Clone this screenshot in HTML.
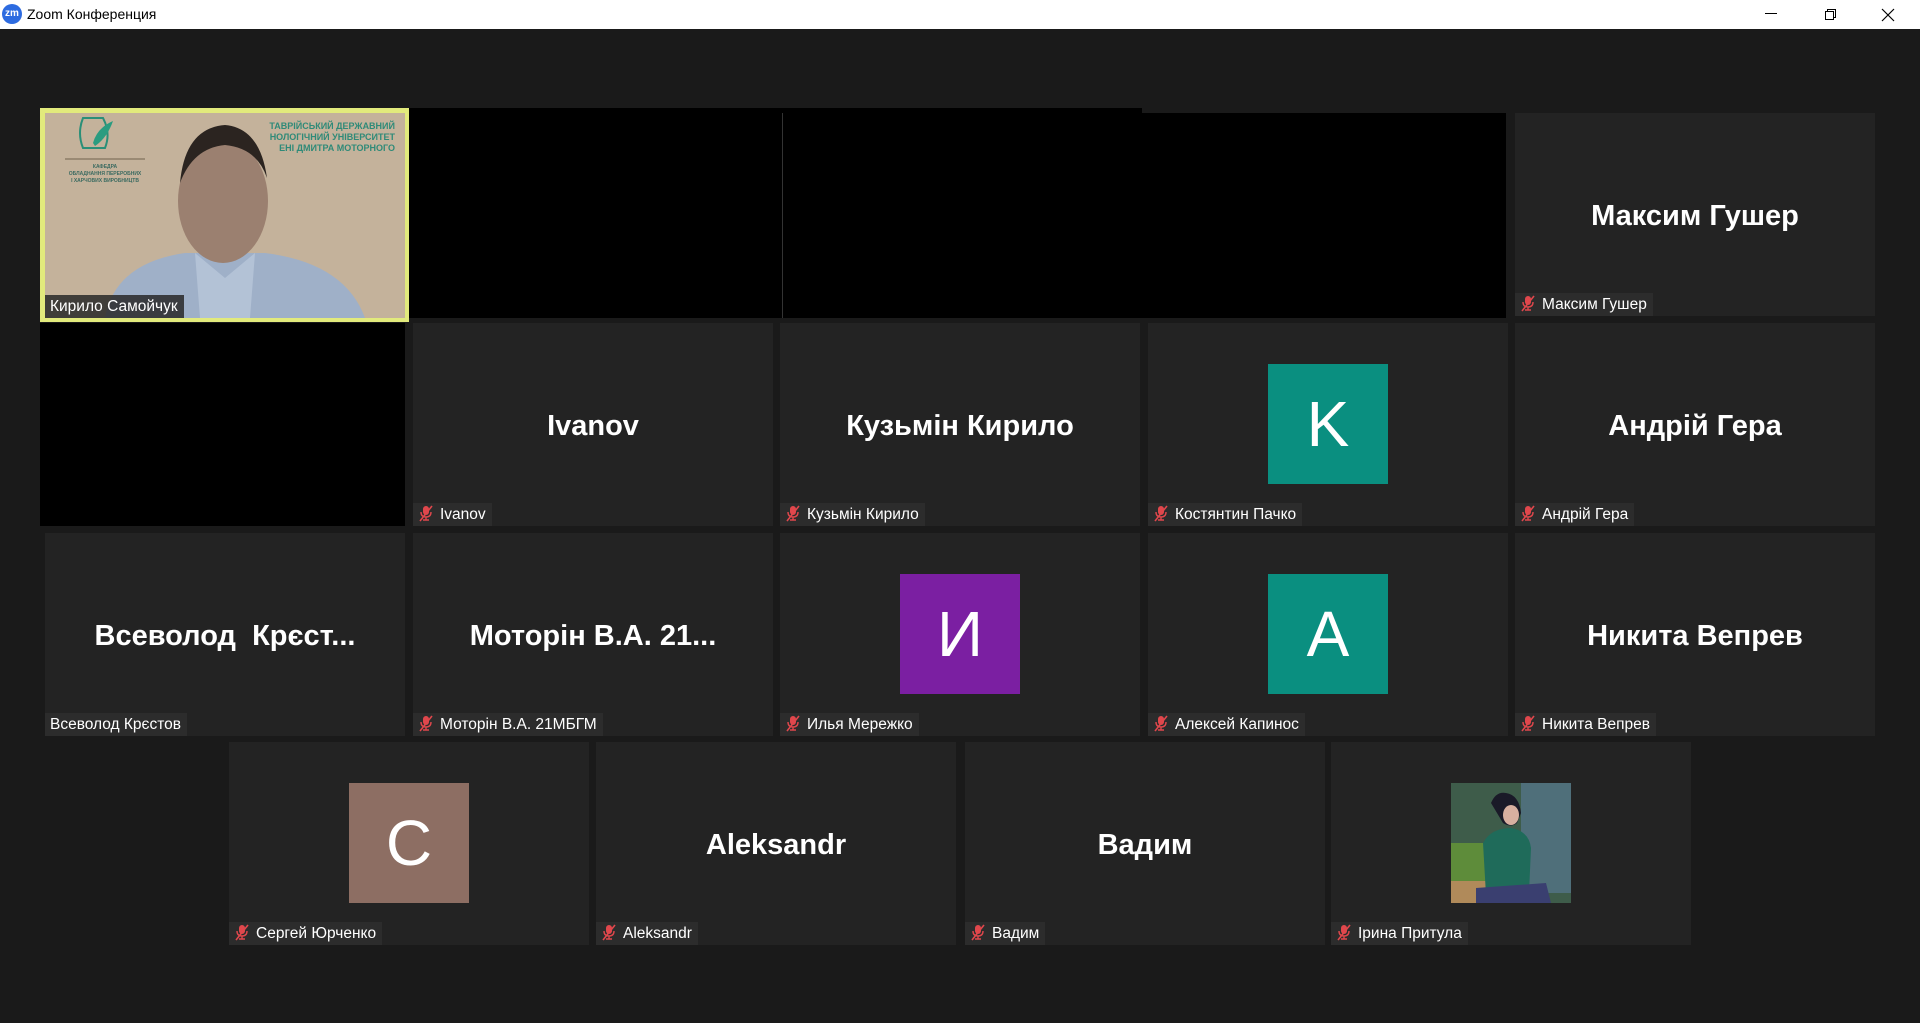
<!DOCTYPE html>
<html><head><meta charset="utf-8"><style>
*{margin:0;padding:0;box-sizing:border-box}
body{width:1920px;height:1023px;background:#1a1a1a;overflow:hidden;font-family:"Liberation Sans","DejaVu Sans",sans-serif;position:relative}
.tb{position:absolute;left:0;top:0;width:1920px;height:29px;background:#fff;color:#000;font-size:14px}
.tile{position:absolute;width:360px;height:203px;background:#232323;overflow:hidden}
.big{position:absolute;left:0;right:0;top:86px;text-align:center;color:#fff;font-weight:bold;font-size:29px;line-height:34px;white-space:nowrap}
.lab{position:absolute;left:0;bottom:-1px;height:24px;background:#2c2c2c;color:#fff;font-size:15.5px;line-height:24px;padding:0 6px 0 5px;white-space:nowrap}
.lab svg{vertical-align:-3px;margin-right:6px}
.av{position:absolute;left:120px;top:41px;width:120px;height:120px;color:#fff;font-size:64px;text-align:center;line-height:120px}
.blk{position:absolute;background:#000}
</style></head><body>
<div class="tb">
<div style="position:absolute;left:2px;top:4px;width:20px;height:20px;border-radius:50%;background:#2d6be0;color:#fff;font-size:10px;line-height:20px;text-align:center;font-weight:bold">zm</div>
<div style="position:absolute;left:27px;top:6px;font-size:14px">Zoom Конференция</div>
<div style="position:absolute;left:1765px;top:13px;width:12px;height:1px;background:#000"></div>
<div style="position:absolute;left:1827px;top:9px;width:9px;height:9px;border:1px solid #000"></div>
<div style="position:absolute;left:1825px;top:11px;width:9px;height:9px;border:1px solid #000;background:#fff"></div>
<svg style="position:absolute;left:1881px;top:8px" width="14" height="14"><path d="M1 1L13 13M13 1L1 13" stroke="#000" stroke-width="1.2"/></svg>
</div>

<div style="position:absolute;left:40px;top:108px;width:369px;height:214px;background:#e2ea7c"></div>
<div style="position:absolute;left:45px;top:113px;width:360px;height:205px;overflow:hidden;background:#c6b39c">
<svg width="360" height="205" viewBox="0 0 360 205">
<rect width="360" height="205" fill="#c4b29b"/>
<path d="M38 5 L58 5 Q66 20 60 35 L38 35 Q32 20 38 5Z" fill="none" stroke="#2a8f78" stroke-width="2"/>
<path d="M48 30 Q52 15 68 8 Q62 25 50 33Z" fill="#2a9c80"/>
<rect x="20" y="45" width="80" height="2" fill="#9a8a74"/>
<text x="60" y="55" font-size="5" fill="#3a6a60" text-anchor="middle" font-weight="bold">КАФЕДРА</text>
<text x="60" y="62" font-size="5" fill="#3a6a60" text-anchor="middle" font-weight="bold">ОБЛАДНАННЯ ПЕРЕРОБНИХ</text>
<text x="60" y="69" font-size="5" fill="#3a6a60" text-anchor="middle" font-weight="bold">І ХАРЧОВИХ ВИРОБНИЦТВ</text>
<text x="350" y="16" font-size="9" fill="#2f8a78" text-anchor="end" font-weight="bold">ТАВРІЙСЬКИЙ ДЕРЖАВНИЙ</text>
<text x="350" y="27" font-size="9" fill="#2f8a78" text-anchor="end" font-weight="bold">НОЛОГІЧНИЙ УНІВЕРСИТЕТ</text>
<text x="350" y="38" font-size="9" fill="#2f8a78" text-anchor="end" font-weight="bold">ЕНІ ДМИТРА МОТОРНОГО</text>
<path d="M60 205 Q70 150 140 140 L220 140 Q300 150 320 205Z" fill="#9fb0c8"/>
<ellipse cx="178" cy="88" rx="45" ry="62" fill="#9b8070"/>
<path d="M135 70 Q140 15 180 12 Q215 15 222 65 Q212 35 180 32 Q148 35 135 70Z" fill="#2b2420"/>
<path d="M150 140 L180 165 L210 140 L205 205 L155 205Z" fill="#b3c2d6"/>
</svg>
<div class="lab" style="background:rgba(40,40,40,.85)">Кирило Самойчук</div>
</div>

<div class="blk" style="left:409px;top:108px;width:733px;height:210px"></div>
<div class="blk" style="left:1142px;top:113px;width:364px;height:205px"></div>
<div style="position:absolute;left:782px;top:113px;width:1px;height:205px;background:#333"></div>
<div class="blk" style="left:40px;top:323px;width:365px;height:203px"></div>

<svg width="0" height="0" style="position:absolute"><defs><g id="mic"><rect x="5" y="1" width="6" height="9" rx="3" fill="#e0474c"/><path d="M3 7 Q3 12 8 12 Q13 12 13 7 M8 12 V15 M5 15 H11" stroke="#e0474c" stroke-width="1.4" fill="none"/><path d="M2 16 L14 1" stroke="#e0474c" stroke-width="1.6"/></g></defs></svg>

<div class="tile" style="left:1515px;top:113px"><div class="big">Максим Гушер</div><div class="lab"><svg width="16" height="17"><use href="#mic"/></svg>Максим Гушер</div></div>

<div class="tile" style="left:413px;top:323px"><div class="big">Ivanov</div><div class="lab"><svg width="16" height="17"><use href="#mic"/></svg>Ivanov</div></div>
<div class="tile" style="left:780px;top:323px"><div class="big">Кузьмін Кирило</div><div class="lab"><svg width="16" height="17"><use href="#mic"/></svg>Кузьмін Кирило</div></div>
<div class="tile" style="left:1148px;top:323px"><div class="av" style="background:#0a8f80">K</div><div class="lab"><svg width="16" height="17"><use href="#mic"/></svg>Костянтин Пачко</div></div>
<div class="tile" style="left:1515px;top:323px"><div class="big">Андрій Гера</div><div class="lab"><svg width="16" height="17"><use href="#mic"/></svg>Андрій Гера</div></div>

<div class="tile" style="left:45px;top:533px"><div class="big">Всеволод&nbsp; Крєст...</div><div class="lab">Всеволод Крєстов</div></div>
<div class="tile" style="left:413px;top:533px"><div class="big">Моторін В.А. 21...</div><div class="lab"><svg width="16" height="17"><use href="#mic"/></svg>Моторін В.А. 21МБГМ</div></div>
<div class="tile" style="left:780px;top:533px"><div class="av" style="background:#7b1fa2">И</div><div class="lab"><svg width="16" height="17"><use href="#mic"/></svg>Илья Мережко</div></div>
<div class="tile" style="left:1148px;top:533px"><div class="av" style="background:#0a8f80">A</div><div class="lab"><svg width="16" height="17"><use href="#mic"/></svg>Алексей Капинос</div></div>
<div class="tile" style="left:1515px;top:533px"><div class="big">Никита Вепрев</div><div class="lab"><svg width="16" height="17"><use href="#mic"/></svg>Никита Вепрев</div></div>

<div class="tile" style="left:229px;top:742px"><div class="av" style="background:#8d6e63">C</div><div class="lab"><svg width="16" height="17"><use href="#mic"/></svg>Сергей Юрченко</div></div>
<div class="tile" style="left:596px;top:742px"><div class="big">Aleksandr</div><div class="lab"><svg width="16" height="17"><use href="#mic"/></svg>Aleksandr</div></div>
<div class="tile" style="left:965px;top:742px"><div class="big">Вадим</div><div class="lab"><svg width="16" height="17"><use href="#mic"/></svg>Вадим</div></div>
<div class="tile" style="left:1331px;top:742px">
<svg class="av" style="background:#3d5a48" width="120" height="120" viewBox="0 0 120 120">
<rect width="120" height="120" fill="#3e5c4a"/>
<rect x="70" y="0" width="50" height="110" fill="#4f6f7a"/>
<rect x="0" y="60" width="40" height="40" fill="#5e8c3a"/>
<rect x="0" y="98" width="40" height="22" fill="#b08a5a"/>
<path d="M40 20 Q45 8 55 10 Q68 12 70 30 L66 40 Q60 45 52 40Z" fill="#1a1a28"/>
<ellipse cx="60" cy="32" rx="8" ry="10" fill="#d8b0a0"/>
<path d="M32 60 Q40 45 60 45 Q78 48 80 65 L78 110 L35 112Z" fill="#1f6b5a"/>
<path d="M25 105 L95 100 L100 120 L25 120Z" fill="#3a3f70"/>
</svg>
<div class="lab"><svg width="16" height="17"><use href="#mic"/></svg>Ірина Притула</div></div>
</body></html>
